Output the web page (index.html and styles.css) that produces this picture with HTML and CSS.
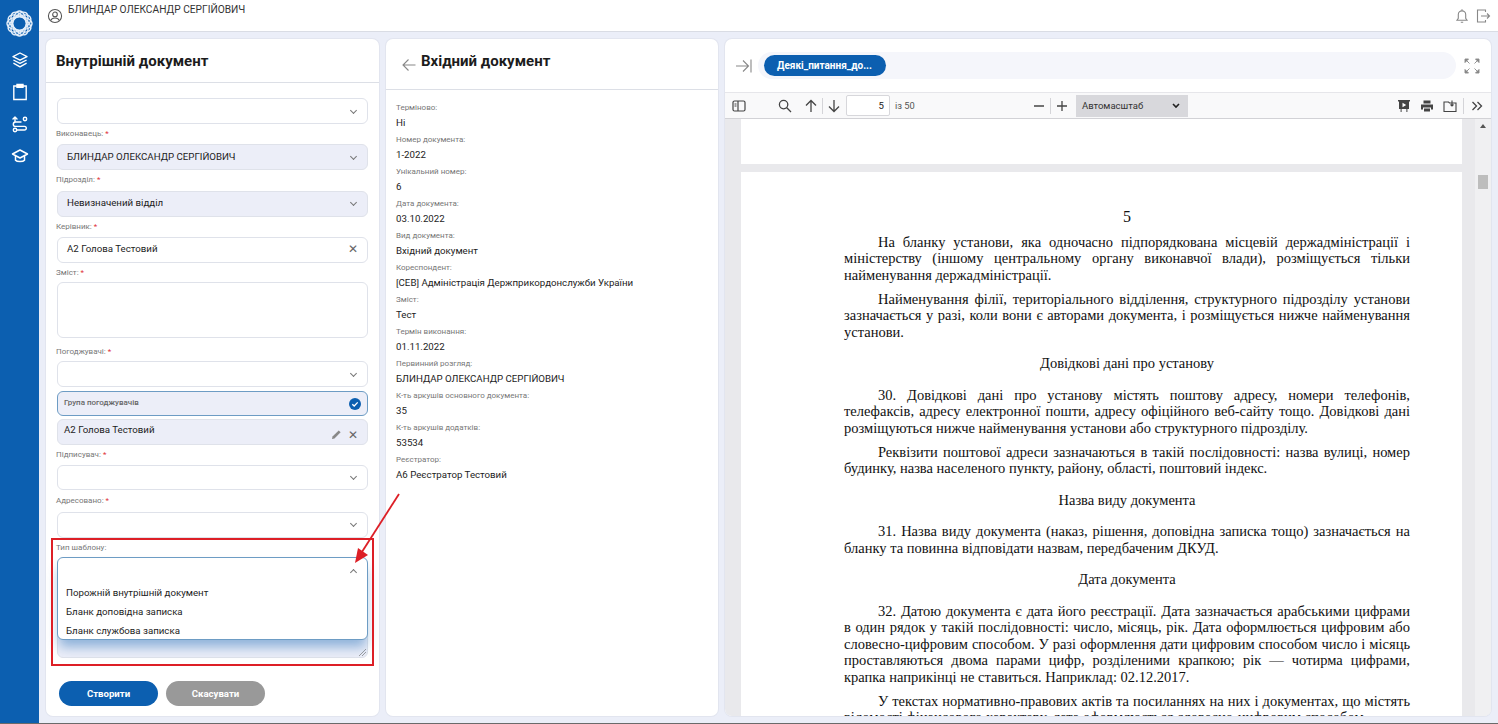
FILE: index.html
```html
<!DOCTYPE html>
<html lang="uk">
<head>
    <meta charset="UTF-8">
    <meta name="viewport" content="width=device-width, initial-scale=1.0">
    <title>Внутрішній документ</title>
    <link rel="stylesheet" href="styles.css">
</head>
<body>
    <div class="app">
        <nav class="sidebar">
            <svg class="logo" viewBox="0 0 28 28" fill="none" stroke="#e3edf8" stroke-width="1.4">
                <ellipse cx="14" cy="14" rx="13" ry="7"/>
                <ellipse cx="14" cy="14" rx="13" ry="7" transform="rotate(30 14 14)"/>
                <ellipse cx="14" cy="14" rx="13" ry="7" transform="rotate(60 14 14)"/>
                <ellipse cx="14" cy="14" rx="13" ry="7" transform="rotate(90 14 14)"/>
                <ellipse cx="14" cy="14" rx="13" ry="7" transform="rotate(120 14 14)"/>
                <ellipse cx="14" cy="14" rx="13" ry="7" transform="rotate(150 14 14)"/>
            </svg>
            <svg class="nav-icon" viewBox="0 0 18 18" fill="none" stroke="#fff" stroke-width="1.4" stroke-linejoin="round">
                <path d="M9 2l7 3.600-7 3.600-7-3.600z"/>
                <path d="M2.400 9L9 12.400 15.600 9"/>
                <path d="M2.400 12.200L9 15.800l6.600-3.600"/>
            </svg>
            <svg class="nav-icon" viewBox="0 0 18 18" fill="none" stroke="#fff" stroke-width="1.4">
                <path d="M6 3H2.800v13.500h12.400V3H12"/>
                <path d="M6 1.500h6v2.800H6z" fill="#fff"/>
            </svg>
            <svg class="nav-icon" viewBox="0 0 18 18" fill="none" stroke="#fff" stroke-width="1.4" stroke-linecap="round">
                <circle cx="14" cy="4" r="1.700"/>
                <circle cx="4" cy="15" r="1.700"/>
                <path d="M10 7H4.500a2.200 2.200 0 0 0 0 4.400h9a1.800 1.800 0 0 1 0 3.600H6"/>
                <path d="M4 6.500V2M2 4l2-2 2 2"/>
            </svg>
            <svg class="nav-icon" viewBox="0 0 18 18" fill="none" stroke="#fff" stroke-width="1.500" stroke-linejoin="round">
                <path d="M9 3L1.500 7 9 11l7.500-4z"/>
                <path d="M4.500 9v4.200C6 15 12 15 13.500 13.200V9"/>
            </svg>
        </nav>
        <div class="main">
            <header class="topbar">
                <div class="user">
                    <svg class="user-icon" viewBox="0 0 18 18" fill="none" stroke="#555" stroke-width="1.2">
                        <circle cx="9" cy="9" r="7.400"/>
                        <circle cx="9" cy="7.200" r="2.600"/>
                        <path d="M4.400 14c.6-2 2.400-2.800 4.600-2.800s4 .8 4.600 2.800"/>
                    </svg>
                    <span class="user-name">БЛИНДАР ОЛЕКСАНДР СЕРГІЙОВИЧ</span>
                </div>
                <div class="top-actions">
                    <svg class="top-icon" viewBox="0 0 16 16" fill="none" stroke="#888" stroke-width="1.1">
                        <path d="M3 12.200h10l-1.300-1.800V6.600a3.700 3.700 0 0 0-7.400 0v3.800z"/>
                        <path d="M8 1.200v1.600M6.800 14.200h2.400"/>
                    </svg>
                    <svg class="top-icon" viewBox="0 0 16 16" fill="none" stroke="#888" stroke-width="1.1">
                        <path d="M10.500 4V2H2.500v12h8v-2"/>
                        <path d="M6 8h8.500M12 5.500L14.500 8 12 10.500"/>
                    </svg>
                </div>
            </header>
            <div class="panels">
                <section class="panel form-panel">
                    <h2 class="panel-title form-title">Внутрішній документ</h2>
                    <div class="form-body">
                        <div class="select first">
                            <span class="chev"></span>
                        </div>
                        <label class="label">Виконавець: <b>*</b></label>
                        <div class="select filled"><span>БЛИНДАР ОЛЕКСАНДР СЕРГІЙОВИЧ</span><span class="chev"></span></div>
                        <label class="label">Підрозділ: <b>*</b></label>
                        <div class="select filled"><span>Невизначений відділ</span><span class="chev"></span></div>
                        <label class="label">Керівник: <b>*</b></label>
                        <div class="select"><span>А2 Голова Тестовий</span><span class="cross">✕</span></div>
                        <label class="label">Зміст: <b>*</b></label>
                        <div class="textarea"></div>
                        <label class="label label-after-area">Погоджувачі: <b>*</b></label>
                        <div class="select"><span class="chev"></span></div>
                        <div class="group-row"><span>Група погоджувачів</span>
                            <svg class="check" viewBox="0 0 12 12"><circle cx="6" cy="6" r="6" fill="#0c5fb0"/><path d="M3.300 6.200l1.900 1.800 3.500-3.600" fill="none" stroke="#fff" stroke-width="1.300"/></svg>
                        </div>
                        <div class="person-row"><span>А2 Голова Тестовий</span>
                            <span class="person-actions">
                                <svg class="pencil" viewBox="0 0 12 12"><path d="M1 11l.7-2.800L8.400 1.500l2.100 2.100-6.700 6.700z" fill="#888"/></svg>
                                <span class="cross">✕</span>
                            </span>
                        </div>
                        <label class="label">Підписувач: <b>*</b></label>
                        <div class="select select-short"><span class="chev"></span></div>
                        <label class="label label-addr">Адресовано: <b>*</b></label>
                        <div class="select"><span class="chev"></span></div>
                        <label class="label label-template">Тип шаблону:</label>
                        <div class="template">
                            <div class="template-area">
                                <svg class="grip" viewBox="0 0 8 8"><path d="M1 8l7-7M4 8l4-4" stroke="#888" stroke-width=".8"/></svg>
                            </div>
                            <div class="menu">
                                <div class="menu-head"><span class="chev up"></span></div>
                                <div class="option">Порожній внутрішній документ</div>
                                <div class="option">Бланк доповідна записка</div>
                                <div class="option">Бланк службова записка</div>
                            </div>
                        </div>
                        <div class="buttons">
                            <button class="btn primary">Створити</button>
                            <button class="btn muted">Скасувати</button>
                        </div>
                    </div>
                </section>
                <section class="panel info-panel">
                    <div class="info-head">
                        <svg class="back" viewBox="0 0 14 14" fill="none" stroke="#888" stroke-width="1.100"><path d="M13.500 7H1M6.500 1.500L1 7l5.500 5.500"/></svg>
                        <h2 class="panel-title">Вхідний документ</h2>
                    </div>
                    <dl class="info-list">
                        <dt>Терміново:</dt><dd>Ні</dd>
                        <dt>Номер документа:</dt><dd>1-2022</dd>
                        <dt>Унікальний номер:</dt><dd>6</dd>
                        <dt>Дата документа:</dt><dd>03.10.2022</dd>
                        <dt>Вид документа:</dt><dd>Вхідний документ</dd>
                        <dt>Кореспондент:</dt><dd>[CEB] Адміністрація Держприкордонслужби України</dd>
                        <dt>Зміст:</dt><dd>Тест</dd>
                        <dt>Термін виконання:</dt><dd>01.11.2022</dd>
                        <dt>Первинний розгляд:</dt><dd>БЛИНДАР ОЛЕКСАНДР СЕРГІЙОВИЧ</dd>
                        <dt>К-ть аркушів основного документа:</dt><dd>35</dd>
                        <dt>К-ть аркушів додатків:</dt><dd>53534</dd>
                        <dt>Реєстратор:</dt><dd>А6 Реєстратор Тестовий</dd>
                    </dl>
                </section>
                <section class="panel viewer-panel">
                    <div class="tabs-row">
                        <svg class="collapse" viewBox="0 0 16 14" fill="none" stroke="#888" stroke-width="1.100"><path d="M0 7h12M7 1.500L12.500 7 7 12.500M15 .5v13"/></svg>
                        <div class="tabs-track"><span class="tab">Деякі_питання_до...</span></div>
                        <svg class="expand" viewBox="0 0 16 16" fill="#888" stroke="#888" stroke-width=".9"><path d="M1 1h3.500L1 4.500zM1 1l4.500 4.500M15 1h-3.500L15 4.500zM15 1l-4.500 4.500M1 15h3.500L1 11.500zM1 15l4.500-4.500M15 15h-3.500l3.500-3.500zM15 15l-4.500-4.500"/></svg>
                    </div>
                    <div class="pdf-toolbar">
                        <div class="tool-group">
                            <svg class="tool sidebar-tool" viewBox="0 0 14 14" fill="none" stroke="#444" stroke-width="1.200"><rect x="1" y="2" width="12" height="10" rx="1.500"/><path d="M6 2v10M2.500 5h2M2.500 7h2"/></svg>
                            <svg class="tool search-tool" viewBox="0 0 14 14" fill="none" stroke="#444" stroke-width="1.300"><circle cx="5.600" cy="5.600" r="4.200"/><path d="M8.800 8.800L13 13"/></svg>
                            <svg class="tool" viewBox="0 0 14 14" fill="none" stroke="#444" stroke-width="1.300"><path d="M7 13V1.500M2 6.500l5-5 5 5"/></svg>
                            <span class="tool-sep"></span>
                            <svg class="tool" viewBox="0 0 14 14" fill="none" stroke="#444" stroke-width="1.300"><path d="M7 1v11.500M2 7.500l5 5 5-5"/></svg>
                            <span class="page-input">5</span>
                            <span class="page-count">із 50</span>
                        </div>
                        <div class="tool-group zoom-group">
                            <svg class="tool" viewBox="0 0 14 14" stroke="#444" stroke-width="1.300"><path d="M2 7h10"/></svg>
                            <span class="tool-sep"></span>
                            <svg class="tool" viewBox="0 0 14 14" stroke="#444" stroke-width="1.300"><path d="M2 7h10M7 2v10"/></svg>
                            <span class="scale-select">Автомасштаб
                                <svg class="scale-chev" viewBox="0 0 8 6" fill="none" stroke="#222" stroke-width="1.600"><path d="M1 1l3 3 3-3"/></svg>
                            </span>
                        </div>
                        <div class="tool-group right-tools">
                            <svg class="tool" viewBox="0 0 14 14"><path d="M1 1h12v1.400h-1v7.600H2V2.400H1zM3.600 10h1v3h-1zM9.400 10h1v3h-1z" fill="#444"/><path d="M5.500 3.800v4.400l3.700-2.200z" fill="#fff"/></svg>
                            <svg class="tool" viewBox="0 0 14 14"><path d="M3.500 1.500h7v3h-7zM1 5.500h12v5h-2v-2H3v2H1zM4 9.500h6v3H4z" fill="#444"/></svg>
                            <svg class="tool" viewBox="0 0 14 14" fill="none" stroke="#444" stroke-width="1.100"><path d="M1 3v9.500h12V4H6.500L5.500 3z"/><path d="M9 1.500v5.500M7.500 5.500L9 7l1.500-1.500"/></svg>
                            <span class="tool-sep"></span>
                            <svg class="tool" viewBox="0 0 14 14" fill="none" stroke="#444" stroke-width="1.300"><path d="M2.500 3l4 4-4 4M7.500 3l4 4-4 4"/></svg>
                        </div>
                    </div>
                    <div class="pdf-area">
                        <div class="pdf-pages">
                            <div class="pdf-page page-tail"></div>
                            <article class="pdf-page page-text">
                                <div class="page-no">5</div>
                                <p>На бланку установи, яка одночасно підпорядкована місцевій держадміністрації і міністерству (іншому центральному органу виконавчої влади), розміщується тільки найменування держадміністрації.</p>
                                <p>Найменування філії, територіального відділення, структурного підрозділу установи зазначається у разі, коли вони є авторами документа, і розміщується нижче найменування установи.</p>
                                <h4>Довідкові дані про установу</h4>
                                <p>30. Довідкові дані про установу містять поштову адресу, номери телефонів, телефаксів, адресу електронної пошти, адресу офіційного веб-сайту тощо. Довідкові дані розміщуються нижче найменування установи або структурного підрозділу.</p>
                                <p>Реквізити поштової адреси зазначаються в такій послідовності: назва вулиці, номер будинку, назва населеного пункту, району, області, поштовий індекс.</p>
                                <h4>Назва виду документа</h4>
                                <p>31. Назва виду документа (наказ, рішення, доповідна записка тощо) зазначається на бланку та повинна відповідати назвам, передбаченим ДКУД.</p>
                                <h4>Дата документа</h4>
                                <p>32. Датою документа є дата його реєстрації. Дата зазначається арабськими цифрами в&nbsp;один рядок у такій послідовності: число, місяць, рік. Дата оформлюється цифровим або словесно-цифровим способом. У разі оформлення дати цифровим способом число і місяць проставляються двома парами цифр, розділеними крапкою; рік — чотирма цифрами, крапка наприкінці не ставиться. Наприклад: 02.12.2017.</p>
                                <p>У текстах нормативно-правових актів та посиланнях на них і документах, що містять відомості фінансового характеру, дата оформлюється словесно-цифровим способом.</p>
                            </article>
                        </div>
                        <div class="scrollbar">
                            <span class="scroll-up"></span>
                            <span class="scroll-thumb"></span>
                        </div>
                    </div>
                </section>
            </div>
        </div>
    </div>
    <!-- червона рамка і стрілка поверх форми -->
    <div class="mark-box"></div>
    <svg class="mark-arrow" viewBox="0 0 54 78" fill="none">
        <path d="M49 4L10 65" stroke="#dd1f26" stroke-width="1.800"/>
        <path d="M5 73l3-15 10 7z" fill="#dd1f26"/>
    </svg>
</body>
</html>
```

FILE: styles.css
```css
*{
    box-sizing: border-box;
}
html, body{
    margin: 0;
    height: 100%;
    overflow: hidden;
}
body{
    font-family: Roboto, "Noto Sans", sans-serif;
    color: #222;
    background: #6a6a6a;
}
.app{
    display: flex;
    height: 723px;
}
.sidebar{
    width: 39px;
    flex-shrink: 0;
    background: #0c5fb0;
    display: flex;
    flex-direction: column;
    align-items: center;
    padding-top: 10px;
}
.logo{
    width: 27px;
    height: 27px;
    margin-bottom: 14px;
}
.nav-icon{
    width: 18px;
    height: 18px;
    margin-bottom: 14px;
}
.main{
    flex: 1;
    display: flex;
    flex-direction: column;
    background: #ebeef8;
    min-width: 0;
}
.topbar{
    height: 32px;
    background: #fff;
    border-bottom: 1px solid #d9dce4;
    display: flex;
    justify-content: space-between;
    padding: 0 7px 0 8px;
}
.user{
    display: flex;
    align-items: flex-start;
    padding-top: 8px;
}
.user-icon{
    width: 16px;
    height: 16px;
}
.user-name{
    font-size: 10.2px;
    margin: -4px 0 0 5px;
    color: #333;
}
.top-actions{
    display: flex;
    gap: 5px;
    padding-top: 8px;
}
.top-icon{
    width: 16px;
    height: 16px;
}
.panels{
    flex: 1;
    display: flex;
    gap: 7px;
    padding: 7px 7px 7px 7px;
    min-height: 0;
}
.panel{
    background: #fff;
    border-radius: 7px;
    box-shadow: 0 0 0 1px #e2e5ef;
    min-height: 0;
}
.panel-title{
    font-size: 15px;
    font-weight: 700;
    margin: 0;
    color: #1c1c1c;
}

/* форма */
.form-panel{
    width: 333px;
    display: flex;
    flex-direction: column;
}
.form-title{
    height: 44px;
    line-height: 44px;
    padding-left: 10px;
    border-bottom: 1px solid #dcdfe6;
}
.form-body{
    padding: 15px 11px 0 11px;
}
.label{
    display: block;
    height: 20.3px;
    line-height: 20px;
    font-size: 8px;
    color: #777;
    margin-left: -1px;
}
.label b{
    color: #e0323a;
    font-weight: 400;
}
.select{
    height: 26px;
    border: 1px solid #dfe2ea;
    border-radius: 6px;
    display: flex;
    justify-content: space-between;
    align-items: center;
    padding: 0 11px 2px 9px;
    font-size: 9.7px;
    color: #1c1c1c;
}
.select.filled{
    background: #eceef8;
}
.select-short{
    height: 25px;
}
.chev{
    width: 5px;
    height: 5px;
    border-right: 1px solid #777;
    border-bottom: 1px solid #777;
    transform: rotate(45deg);
    margin: 0 0 0 auto;
}
.chev.up{
    transform: rotate(225deg);
    margin-top: 4px;
}
.cross{
    font-size: 12px;
    font-weight: 400;
    color: #666;
    margin-right: -2px;
}
.textarea{
    height: 56px;
    margin-top: -1px;
    border: 1px solid #dfe2ea;
    border-radius: 6px;
}
.label-after-area{
    margin-top: 4px;
    height: 19px;
}
.label-addr{
    margin-top: 1px;
}
.group-row, .person-row{
    background: #eceef8;
    border-radius: 6px;
    display: flex;
    justify-content: space-between;
    padding: 0 6px;
}
.group-row{
    height: 25px;
    border: 1px solid #6d9cc4;
    margin-top: 4px;
    align-items: center;
    font-size: 8px;
    font-weight: 500;
    color: #666;
}
.group-row span{
    padding-bottom: 3px;
}
.check{
    width: 12px;
    height: 12px;
}
.person-row{
    height: 26px;
    border: 1px solid #dfe2ea;
    margin-top: 3px;
    font-size: 9.7px;
    color: #1c1c1c;
    padding-top: 4px;
}
.person-actions{
    display: flex;
    gap: 6px;
    align-items: center;
    padding-top: 5px;
    height: 16px;
    padding-right: 5px;
}
.pencil{
    width: 11px;
    height: 11px;
}
.label-template{
    height: 19px;
}
.template{
    position: relative;
    height: 101px;
}
.template-area{
    position: absolute;
    left: 0;
    right: 0;
    top: 40px;
    bottom: 0;
    background: #eceef8;
    border: 1px solid #dfe2ea;
    border-radius: 6px;
}
.grip{
    position: absolute;
    right: 1px;
    bottom: 1px;
    width: 8px;
    height: 8px;
}
.menu{
    position: absolute;
    left: 0;
    right: 0;
    top: 0;
    height: 83px;
    background: #fff;
    border: 1px solid #6d9cc4;
    border-radius: 6px;
    box-shadow: 0 9px 12px -2px rgba(12, 95, 176, .42);
    font-size: 9.7px;
}
.menu-head{
    height: 25px;
    display: flex;
    align-items: center;
    padding-right: 11px;
}
.option{
    height: 19px;
    line-height: 19px;
    padding-left: 8px;
    color: #1c1c1c;
}
.buttons{
    display: flex;
    gap: 8px;
    padding: 23px 0 0 2px;
}
.btn{
    width: 99px;
    height: 25px;
    border: none;
    border-radius: 13px;
    color: #fff;
    font-family: inherit;
    font-size: 9.6px;
    font-weight: 700;
}
.btn.primary{
    background: #0c5fb0;
}
.btn.muted{
    background: #999;
}

/* вхідний документ */
.info-panel{
    width: 332px;
}
.info-head{
    height: 51px;
    border-bottom: 1px solid #dcdfe6;
    display: flex;
    padding: 13px 0 0 16px;
}
.back{
    width: 14px;
    height: 14px;
    margin: 6px 5px 0 0;
}
.info-list{
    margin: 0;
    padding: 12px 10px;
}
.info-list dt{
    font-size: 8px;
    color: #777;
    line-height: 12px;
}
.info-list dd{
    margin: 0 0 3px 0;
    font-size: 9.7px;
    color: #1c1c1c;
    line-height: 17px;
}

/* перегляд pdf */
.viewer-panel{
    flex: 1;
    min-width: 0;
    display: flex;
    flex-direction: column;
    overflow: hidden;
}
.tabs-row{
    height: 53px;
    display: flex;
    align-items: center;
    padding: 0 11px 0 11px;
    flex-shrink: 0;
}
.collapse{
    width: 16px;
    height: 14px;
    margin-right: 6px;
}
.tabs-track{
    flex: 1;
    height: 27px;
    background: #f5f6fb;
    border-radius: 14px;
    display: flex;
    align-items: center;
    padding-left: 6px;
}
.tab{
    width: 122px;
    height: 21px;
    line-height: 21px;
    border-radius: 11px;
    background: #0c5fb0;
    color: #fff;
    font-size: 10px;
    font-weight: 700;
    padding-left: 13px;
}
.expand{
    width: 16px;
    height: 16px;
    margin-left: 8px;
}
.pdf-toolbar{
    height: 27px;
    flex-shrink: 0;
    background: #f9f9fa;
    border-top: 1px solid #e6e6ea;
    border-bottom: 1px solid #d2d2d6;
    display: grid;
    grid-template-columns: 1fr auto 1fr;
    align-items: center;
    padding: 0 3px;
}
.tool-group{
    display: flex;
    align-items: center;
}
.tool{
    width: 14px;
    height: 14px;
    margin: 0 4px;
}
.sidebar-tool{
    margin-right: 28px;
}
.search-tool{
    margin-right: 8px;
}
.tool-sep{
    width: 1px;
    height: 16px;
    background: #d4d4d8;
}
.page-input{
    width: 44px;
    height: 21px;
    line-height: 19px;
    border: 1px solid #d7d7db;
    border-radius: 2px;
    background: #fff;
    text-align: right;
    padding-right: 5px;
    font-size: 9.6px;
    margin-left: 1px;
}
.page-count{
    font-size: 9.3px;
    color: #555;
    margin-left: 5px;
}
.scale-select{
    width: 112px;
    height: 22px;
    background: #d8d8dc;
    font-size: 9.5px;
    color: #333;
    display: flex;
    align-items: center;
    justify-content: space-between;
    padding: 0 8px 0 6px;
    margin-left: 3px;
}
.scale-chev{
    width: 8px;
    height: 6px;
}
.right-tools{
    justify-content: flex-end;
}
.right-tools .tool{
    margin: 0 4.5px;
}
.right-tools .tool-sep{
    margin: 0 1.5px;
}
.pdf-area{
    flex: 1;
    min-height: 0;
    display: flex;
    background: #e9e9ec;
    overflow: hidden;
}
.pdf-pages{
    flex: 1;
    min-width: 0;
    padding: 0 13px 0 16px;
}
.pdf-page{
    background: #fff;
}
.page-tail{
    height: 45px;
    margin-bottom: 8px;
}
.page-text{
    padding: 37px 52px 0 103px;
    font-family: "Liberation Serif", serif;
    font-size: 14.5px;
    line-height: 16.4px;
    color: #111;
}
.page-no{
    text-align: center;
    font-size: 16px;
    height: 16px;
    line-height: 16px;
    margin-bottom: 9px;
}
.page-text p{
    margin: 0 0 7.7px 0;
    text-align: justify;
    text-indent: 34px;
}
.page-text h4{
    margin: 15.2px 0;
    font-size: inherit;
    font-weight: 400;
    text-align: center;
}
.scrollbar{
    width: 16px;
    flex-shrink: 0;
    background: #f0f0f2;
    position: relative;
}
.scroll-up{
    position: absolute;
    left: 5px;
    top: 5px;
    border: 3px solid transparent;
    border-bottom: 4px solid #555;
    border-top: 0;
}
.scroll-thumb{
    position: absolute;
    left: 3px;
    top: 56px;
    width: 10px;
    height: 14px;
    background: #bdbdbd;
}

/* червона рамка */
.mark-box{
    position: absolute;
    left: 51px;
    top: 538px;
    width: 323px;
    height: 128px;
    border: 2px solid #dd1f26;
}
.mark-arrow{
    position: absolute;
    left: 350px;
    top: 490px;
    width: 54px;
    height: 78px;
}
```
